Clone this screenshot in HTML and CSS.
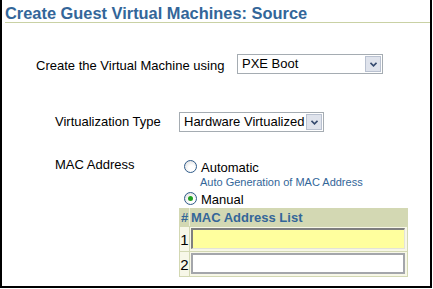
FILE: index.html
```html
<!DOCTYPE html>
<html lang="en">
<head>
    <meta charset="UTF-8">
    <title>Create Guest Virtual Machines: Source</title>
    <link rel="stylesheet" href="styles.css">
</head>
<body>

    <div class="page">
        <h1>Create Guest Virtual Machines: Source</h1>

        <div class="row row-source">
            <span class="label">Create the Virtual Machine using</span>
            <div class="select select-source">
                <span class="select-text">PXE Boot</span>
                <span class="select-btn">
                    <svg viewBox="0 0 7 5" width="7" height="5"><polyline points="0.5,0.8 3.5,3.8 6.5,0.8" fill="none" stroke="#34496e" stroke-width="1.6"/></svg>
                </span>
            </div>
        </div>

        <div class="row row-type">
            <span class="label">Virtualization Type</span>
            <div class="select select-type">
                <span class="select-text">Hardware Virtualized</span>
                <span class="select-btn">
                    <svg viewBox="0 0 7 5" width="7" height="5"><polyline points="0.5,0.8 3.5,3.8 6.5,0.8" fill="none" stroke="#34496e" stroke-width="1.6"/></svg>
                </span>
            </div>
        </div>

        <div class="row row-mac">
            <span class="label label-mac">MAC Address</span>
            <div class="mac-options">
                <div class="radio-line">
                    <span class="radio"></span>
                    <span>Automatic</span>
                </div>
                <div class="hint">Auto Generation of MAC Address</div>
                <div class="radio-line">
                    <span class="radio checked"></span>
                    <span>Manual</span>
                </div>
                <table class="mac-table">
                    <tr>
                        <th class="num">#</th>
                        <th>MAC Address List</th>
                    </tr>
                    <tr>
                        <td class="num">1</td>
                        <td class="cell"><div class="field active"></div></td>
                    </tr>
                    <tr>
                        <td class="num">2</td>
                        <td class="cell"><div class="field"></div></td>
                    </tr>
                </table>
            </div>
        </div>
    </div>

</body>
</html>
```

FILE: styles.css
```css
* {
    margin: 0;
    padding: 0;
    box-sizing: border-box;
    font-family: "Liberation Sans", Arial, sans-serif;
}

body {
    background: #fff;
    color: #000;
}

.page {
    width: 432px;
    height: 288px;
    border-left: 2px solid #000;
    border-right: 2px solid #000;
    border-bottom: 2px solid #000;
}

h1 {
    margin-left: 3px;
    padding-top: 4px;
    font-size: 16.4px;
    line-height: 18px;
    font-weight: bold;
    color: #336699;
    border-bottom: 1px solid #c9d1a4;
}

.row {
    display: flex;
    align-items: center;
    font-size: 13px;
}

.label {
    line-height: 15px;
}

.row-source {
    margin-top: 31px;
    padding-left: 34px;
}

.row-source .label {
    width: 201px;
    padding-top: 2px;
}

.row-type {
    margin-top: 38px;
    padding-left: 53px;
}

.row-type .label {
    width: 124px;
    padding-bottom: 2px;
}

.select {
    display: flex;
    align-items: stretch;
    height: 20px;
    border: 1px solid #a5acb2;
    background: #fff;
}

.select-source {
    width: 146px;
}

.select-type {
    width: 145px;
}

.select-text {
    flex: 1;
    padding-left: 4px;
    line-height: 18px;
}

.select-btn {
    width: 16px;
    margin: 1px;
    display: flex;
    align-items: center;
    justify-content: center;
    background: #dfe3ec;
    border: 1px solid #b9c1d0;
}

.row-mac {
    align-items: flex-start;
    margin-top: 28px;
    padding-left: 53px;
}

.label-mac {
    width: 124px;
    margin-top: -3px;
    line-height: 16px;
}

.radio-line {
    display: flex;
    align-items: flex-start;
    margin-left: 5px;
    line-height: 16px;
}

.radio {
    width: 13px;
    height: 13px;
    margin-right: 4px;
    border: 1px solid #2f5b8a;
    border-radius: 50%;
    background: radial-gradient(circle at 60% 65%, #ffffff 30%, #d6d6d6 100%);
    display: flex;
    align-items: center;
    justify-content: center;
}

.radio.checked::after {
    content: "";
    width: 5px;
    height: 5px;
    border-radius: 50%;
    background: #21a121;
}

.hint {
    margin-left: 21px;
    margin-bottom: 3px;
    font-size: 11px;
    line-height: 13px;
    color: #336699;
}

.mac-table {
    border-collapse: collapse;
    width: 229px;
}

.mac-table th,
.mac-table td {
    border: 1px solid #d3d8b3;
}

.mac-table th {
    height: 17px;
    background: #d3d8b3;
    color: #336699;
    font-size: 13px;
    line-height: 17px;
    text-align: left;
    padding-left: 1px;
}

.mac-table th.num {
    border-right-color: #ecefdc;
}

.mac-table .num {
    width: 11px;
    padding: 0;
    text-align: center;
}

.mac-table td.num {
    background: #f7f7e8;
    font-size: 15px;
}

.mac-table td.cell {
    height: 24px;
    background: #f7f7e8;
    padding: 1px 2px 2px 1px;
}

.field {
    width: 214px;
    height: 21px;
    background: #fff;
    border: 2px solid #a4a6ab;
}

.field.active {
    background: #ffff9e;
    border-top: 2px solid #7f7f7f;
    border-left: 2px solid #7f7f7f;
    border-right: 1px solid #e4e4d8;
    border-bottom: 1px solid #e4e4d8;
}
```
